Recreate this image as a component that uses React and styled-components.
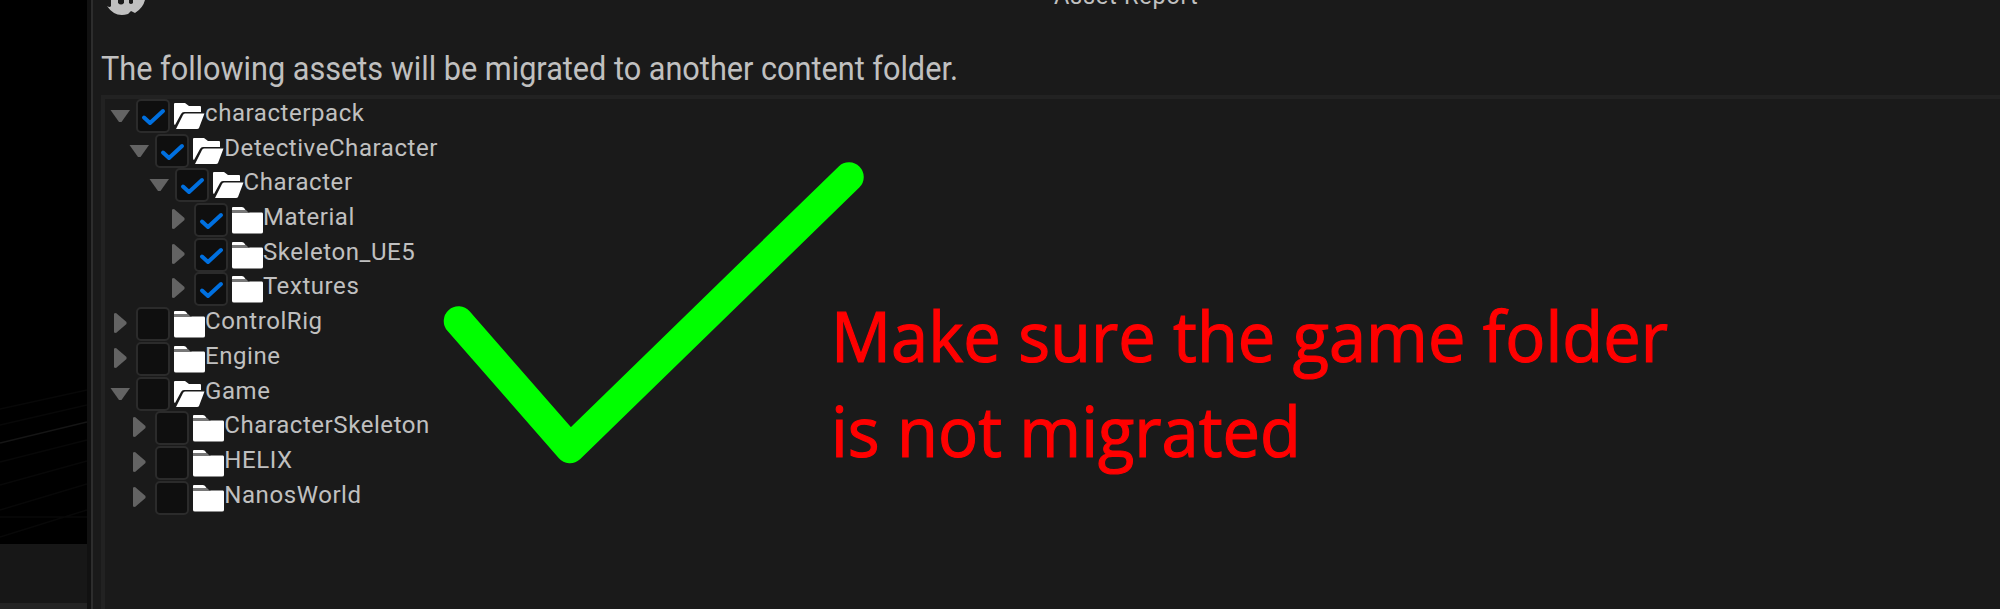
import React from "react";
import styled, { createGlobalStyle } from "styled-components";

const Global = createGlobalStyle`
  body { margin: 0; background: #1a1a1a; }
  * { box-sizing: border-box; }
`;
const Screen = styled.div`
  position: relative;
  display: flex;
  width: 2000px;
  height: 609px;
  overflow: hidden;
  font-family: Roboto, "Liberation Sans", sans-serif;
  color: #c0c0c0;
`;
const Backdrop = styled.div`
  width: 91px;
  flex: none;
  display: flex;
  flex-direction: column;
  border-right: 4px solid #111;
  background: #000;
`;
const Viewport = styled.svg`
  display: block;
  width: 87px;
  height: 544px;
`;
const Shelf = styled.div`
  flex: 1;
  background: #171717;
  border-bottom: 6px solid #242424;
`;
const Dialog = styled.main`
  flex: 1;
  min-width: 0;
  display: flex;
  flex-direction: column;
  border-left: 2px solid #2d2d2d;
  background: #1a1a1a;
  padding-left: 8px;
`;
const TitleBar = styled.header`
  display: flex;
  height: 44px;
  flex: none;
`;
const Logo = styled.svg`
  display: block;
  width: 50px;
  height: 20px;
  flex: none;
`;
const Title = styled.h1`
  margin: -18px 0 0 903px;
  font-size: 23.5px;
  line-height: 28px;
  font-weight: 400;
  letter-spacing: 0.75px;
  white-space: nowrap;
`;
const Message = styled.p`
  margin: 0;
  height: 51px;
  line-height: 50px;
  font-size: 32.5px;
  white-space: nowrap;
  transform: scaleX(0.943);
  transform-origin: 0 0;
`;
const Tree = styled.ul`
  flex: 1;
  margin: 0;
  padding: 0 0 0 5px;
  list-style: none;
  border: solid #222;
  border-width: 4px 0 0 4px;
`;
const Row = styled.li`
  display: flex;
  align-items: flex-start;
  height: 34.7px;
  padding-left: ${(p) => p.$depth * 19.3}px;
`;
const Arrow = styled.svg`
  display: block;
  width: 26px;
  height: 34px;
  flex: none;
`;
const Check = styled.span`
  display: block;
  width: 34px;
  height: 34px;
  flex: none;
  border: 2px solid #2b2b2b;
  border-radius: 5px;
  background: #0f0f0f;
  svg { display: block; width: 30px; height: 30px; }
`;
const Folder = styled.svg`
  display: block;
  width: 32px;
  height: 34px;
  margin-left: 3px;
  flex: none;
`;
const Label = styled.span`
  font-size: 24px;
  line-height: 29px;
  letter-spacing: 0.57px;
  white-space: nowrap;
`;
const Tick = styled.svg`
  position: absolute;
  left: 420px;
  top: 140px;
  width: 460px;
  height: 340px;
`;
const Note = styled.p`
  position: absolute;
  left: 831px;
  top: 288px;
  margin: 0;
  font: 400 69px/94.5px "Open Sans", "Noto Sans", sans-serif;
  color: #f00;
  -webkit-text-stroke: 1.2px #f00;
  white-space: nowrap;
  transform: scaleX(0.968);
  transform-origin: 0 0;
`;

const rows = [
  [0, "characterpack", true, true],
  [1, "DetectiveCharacter", true, true],
  [2, "Character", true, true],
  [3, "Material", false, true],
  [3, "Skeleton_UE5", false, true],
  [3, "Textures", false, true],
  [0, "ControlRig", false, false],
  [0, "Engine", false, false],
  [0, "Game", true, false],
  [1, "CharacterSkeleton", false, false],
  [1, "HELIX", false, false],
  [1, "NanosWorld", false, false],
];

function TreeRow({ depth, name, open, checked }) {
  return (
    <Row $depth={depth}>
      <Arrow viewBox="0 0 26 34">
        <path fill="#636363" d={open ? "M0.5 11H20L11.5 23H9Z" : "M4 6.5L6 6L16.5 15V17L6 26L4 25.5Z"} />
      </Arrow>
      <Check>
        {checked && (
          <svg viewBox="0 0 30 30">
            <path d="M6 16.500L12 22L25 10" fill="none" stroke="#0070e0" strokeWidth="4" strokeLinecap="round" strokeLinejoin="round" />
          </svg>
        )}
      </Check>
      <Folder viewBox="0 0 32 34">
        {open ? (
          <g fill="#fff">
            <path d="M1 5Q1 4 2 4H12L16 7H27Q28 7 28 8V13H11Q9 13 8 15L2 26Q1 26 1 24Z" />
            <path d="M3 30L10 16Q10.500 14.500 12 14.500H31.500L26 29Q25.500 30 24 30Z" />
          </g>
        ) : (
          <g>
            <path fill="#777" d="M1 7H15L19 11H1Z" />
            <path fill="#fff" d="M1 5Q1 4 2 4H11Q13 4 14.500 7H1Z" />
            <path fill="#fff" d="M1 10H17L19 9.500H31Q32 9.500 32 11V29Q32 30.500 30 30.500H3Q1 30.500 1 29Z" />
          </g>
        )}
      </Folder>
      <Label>{name}</Label>
    </Row>
  );
}

export default function App() {
  return (
    <Screen>
      <Global />
      <Backdrop>
        <Viewport viewBox="0 0 87 544">
          <g stroke="#080808" strokeWidth="1.500" fill="none">
            <path stroke="#151515" d="M0 443L87 422" />
            <path d="M0 462L87 440M0 485L87 461M0 510L87 484M0 537L87 510M0 425L87 405M0 409L87 390M0 517H87" />
          </g>
        </Viewport>
        <Shelf />
      </Backdrop>
      <Dialog>
        <TitleBar>
          <Logo viewBox="0 0 50 20">
            <path fill="#c0c0c0" d="M6 6Q9 8 10 6V0H17V3Q20 6 23 3V0H28V3Q30 5 32 3V0H44Q42 8 34 13L30 11L27 14Q14 18 6 6Z" />
          </Logo>
          <Title>Asset Report</Title>
        </TitleBar>
        <Message>The following assets will be migrated to another content folder.</Message>
        <Tree>
          {rows.map(([depth, name, open, checked]) => (
            <TreeRow key={name} depth={depth} name={name} open={open} checked={checked} />
          ))}
        </Tree>
      </Dialog>
      <Tick viewBox="0 0 460 340">
        <path d="M38.500 181L150 308.500L429 37" fill="none" stroke="#0f0" strokeWidth="29.500" strokeLinecap="round" strokeLinejoin="round" />
      </Tick>
      <Note>Make sure the game folder<br />is not migrated</Note>
    </Screen>
  );
}
